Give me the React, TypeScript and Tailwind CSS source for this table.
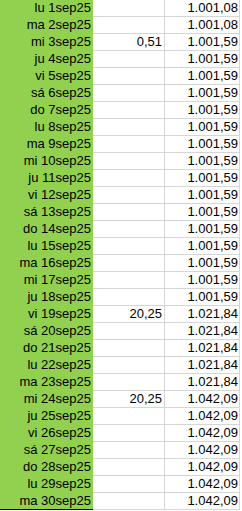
const DAYS = ["lu", "ma", "mi", "ju", "vi", "sá", "do"];

const EXTRA: Record<number, string> = {
  3: "0,51",
  19: "20,25",
  24: "20,25",
};

function totalFor(day: number) {
  if (day <= 2) return "1.001,08";
  if (day <= 18) return "1.001,59";
  if (day <= 23) return "1.021,84";
  return "1.042,09";
}

const rows = Array.from({ length: 30 }, (_, i) => {
  const day = i + 1;
  return {
    label: `${DAYS[i % 7]} ${day}sep25`,
    extra: EXTRA[day] ?? "",
    total: totalFor(day),
  };
});

export default function App() {
  return (
    <div className="w-[242px] h-[511px] bg-white overflow-hidden font-['Liberation_Sans',Arial,sans-serif] text-[13px] text-black">
      {rows.map((r, i) => (
        <div key={i} className="flex h-[17px] leading-[16px]">
          <div
            className={`w-[93px] bg-[#92d050] text-right pr-[2px] ${
              i === rows.length - 1 ? "border-b border-black" : "pb-px"
            }`}
          >
            {r.label}
          </div>
          <div className="w-[72px] border-b border-r border-[#d6d6d6] text-right pr-[2px]">
            {r.extra}
          </div>
          <div className="w-[75px] border-b border-r border-[#d6d6d6] text-right pr-[1px]">
            {r.total}
          </div>
        </div>
      ))}
    </div>
  );
}
